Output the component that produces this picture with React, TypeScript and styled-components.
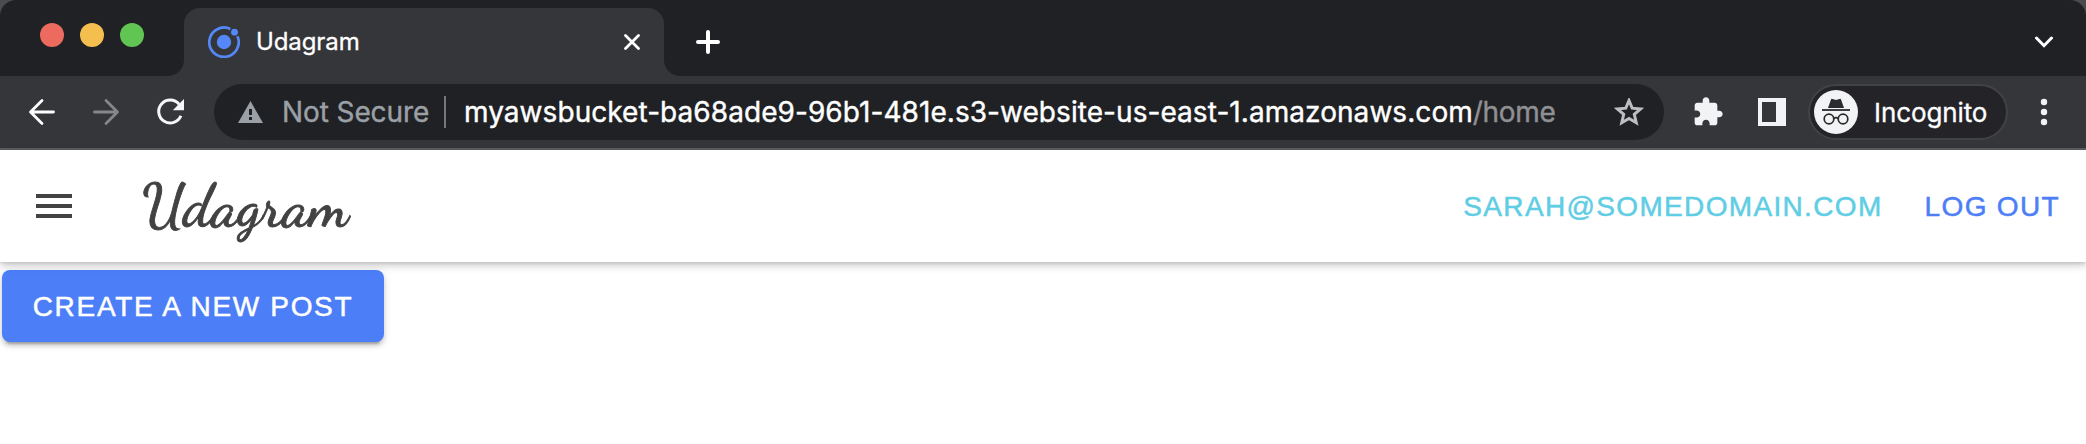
import React from "react";
import styled, { createGlobalStyle } from "styled-components";

const GlobalStyle = createGlobalStyle`
  * { box-sizing: border-box; }
  html, body { margin: 0; padding: 0; background: #fff; }
  body { overflow: hidden; }
  svg { display: block; flex: none; }
`;

const Window = styled.div`
  width: 2086px;
  height: 444px;
  display: flex;
  flex-direction: column;
  background: #fff;
  overflow: hidden;
  font-family: Inter, "Liberation Sans", sans-serif;
`;

const Desktop = styled.div`
  background: #4a4b4e;
`;

const TabStrip = styled.div`
  height: 76px;
  display: flex;
  align-items: flex-start;
  padding: 0 33px 0 40px;
  background: #202124;
  border-radius: 16px 16px 0 0;
`;

const Lights = styled.div`
  display: flex;
  gap: 16px;
  margin: 23px 40px 0 0;
`;

const Light = styled.span<{ $color: string }>`
  width: 24px;
  height: 24px;
  border-radius: 50%;
  background: ${(p) => p.$color};
`;

const Tab = styled.div`
  position: relative;
  width: 480px;
  height: 68px;
  margin-top: 8px;
  padding: 0 24px 0 24px;
  display: flex;
  align-items: center;
  background: #35363a;
  border-radius: 16px 16px 0 0;
  &::before,
  &::after {
    content: "";
    position: absolute;
    bottom: 0;
    width: 16px;
    height: 16px;
  }
  &::before {
    left: -16px;
    background: radial-gradient(circle at 0 0, transparent 15.5px, #35363a 16.5px);
  }
  &::after {
    right: -16px;
    background: radial-gradient(circle at 100% 0, transparent 15.5px, #35363a 16.5px);
  }
`;

const TabTitle = styled.span`
  flex: 1;
  margin-left: 16px;
  color: #fff;
  font-size: 24px;
  line-height: 32px;
  letter-spacing: -0.1px;
  -webkit-text-stroke: 0.3px currentColor;
`;

const StripButton = styled.span`
  margin: 30px 0 0 32px;
`;

const ChevronSlot = styled.span`
  margin: 36px 0 0 auto;
`;

const Toolbar = styled.div`
  height: 74px;
  display: flex;
  align-items: center;
  padding: 0 38px 0 28px;
  background: #35363a;
  border-bottom: 2px solid #5d5e62;
`;

const NavIcons = styled.div`
  display: flex;
  gap: 36px;
  margin-right: 30px;
`;

const Omnibox = styled.div`
  width: 1450px;
  height: 56px;
  display: flex;
  align-items: center;
  padding: 0 20px 0 24px;
  border-radius: 28px;
  background: #202124;
  font-size: 28px;
  line-height: 40px;
  white-space: pre;
  -webkit-text-stroke: 0.4px currentColor;
`;

const Security = styled.span`
  margin-left: 19px;
  width: 162px;
  color: #9aa0a6;
  letter-spacing: -0.1px;
`;

const Divider = styled.span`
  width: 2px;
  height: 32px;
  margin-right: 18px;
  background: #75777b;
`;

const Url = styled.span`
  flex: 1;
  color: #fff;
  letter-spacing: 0.06px;
`;

const UrlPath = styled.span`
  color: #8f9093;
  letter-spacing: -0.3px;
`;

const Actions = styled.div`
  display: flex;
  align-items: center;
  margin-left: auto;
`;

const ActionIcon = styled.span<{ $gap: number }>`
  margin-right: ${(p) => p.$gap}px;
`;

const Incognito = styled.div`
  width: 200px;
  height: 56px;
  display: flex;
  align-items: center;
  padding-left: 4px;
  border: 2px solid #414246;
  border-radius: 28px;
  background: #242428;
  margin-right: 32px;
`;

const IncognitoLabel = styled.span`
  margin-left: 16px;
  padding-top: 1px;
  color: #fff;
  font-size: 26px;
  line-height: 36px;
  letter-spacing: -0.1px;
  white-space: nowrap;
  -webkit-text-stroke: 0.3px currentColor;
`;

const AppHeader = styled.header`
  position: relative;
  height: 112px;
  flex: none;
  display: flex;
  align-items: center;
  padding: 0 26px 0 36px;
  background: #fff;
  box-shadow: 0 3px 8px rgba(0, 0, 0, 0.24), 0 2px 2px rgba(0, 0, 0, 0.05);
`;

const Brand = styled.h1`
  margin: 0 0 0 70px;
  color: #424242;
  font-family: "Dancing Script", "Liberation Serif", serif;
  font-weight: 500;
  font-size: 60px;
  line-height: 72px;
  -webkit-text-stroke: 0.9px currentColor;
`;

const Account = styled.nav`
  margin-left: auto;
  padding-top: 2px;
  display: flex;
  gap: 42px;
`;

const label = `
  font-family: "Liberation Sans", sans-serif;
  font-size: 28px;
  line-height: 34px;
  letter-spacing: 1.68px;
  text-transform: uppercase;
  white-space: nowrap;
  -webkit-text-stroke: 0.5px currentColor;
`;

const TextLink = styled.a<{ $color: string }>`
  ${label}
  letter-spacing: 1.34px;
  color: ${(p) => p.$color};
`;

const Content = styled.main`
  padding: 8px 2px;
`;

const PrimaryButton = styled.button`
  ${label}
  width: 382px;
  height: 72px;
  padding: 2px 0 0;
  border: 0;
  border-radius: 8px;
  background: #4c7ef8;
  color: #fff;
  box-shadow: 0 6px 2px -4px rgba(0, 0, 0, 0.2), 0 4px 4px rgba(0, 0, 0, 0.14), 0 2px 10px rgba(0, 0, 0, 0.12);
`;

const IonicMark = () => (
  <svg width="32" height="32" viewBox="0 0 32 32">
    <circle cx="16" cy="16" r="7.2" fill="#5487f8" />
    <circle cx="26.5" cy="6.2" r="3.4" fill="#5487f8" />
    <path d="M22.4 3A14.7 14.7 0 1 0 29.4 10.200" fill="none" stroke="#5487f8" strokeWidth="2.7" />
  </svg>
);

const BackIcon = () => (
  <svg width="28" height="28" viewBox="0 0 28 28" fill="none" stroke="#fff" strokeWidth="2.8" strokeLinecap="round" strokeLinejoin="round">
    <path d="M25.5 14H3M14 2.5 2.5 14 14 25.5" />
  </svg>
);

const ForwardIcon = () => (
  <svg width="28" height="28" viewBox="0 0 28 28" fill="none" stroke="#86878a" strokeWidth="2.8" strokeLinecap="round" strokeLinejoin="round">
    <path d="M2.5 14H25M14 2.5 25.5 14 14 25.5" />
  </svg>
);

const ReloadIcon = () => (
  <svg width="28" height="28" viewBox="0 0 28 28">
    <path d="M23.1 6.2A11.5 11.5 0 1 0 24.9 17.8" fill="none" stroke="#f5f6f7" strokeWidth="3" />
    <path d="M28 1v11.2H16.8z" fill="#f5f6f7" />
  </svg>
);

const WarningIcon = () => (
  <svg width="25" height="22" viewBox="0 0 25 22">
    <path d="M12.5 0 25 22H0z" fill="#9aa0a6" />
    <path d="M11 8h3v6h-3zM11 16h3v3h-3z" fill="#202124" />
  </svg>
);

const StarIcon = () => (
  <svg width="30" height="28" viewBox="0 0 30 28">
    <path d="M15 3.4 17.9 10.3 25.6 11 19.8 16 21.6 23.6 15 19.7 8.4 23.6 10.2 16 4.4 11 12.1 10.3z" fill="none" stroke="#bdbec0" strokeWidth="2.700" transform="translate(-1.500 -1.200) scale(1.100)" />
  </svg>
);

const PuzzleIcon = () => (
  <svg width="32" height="32" viewBox="0 0 24 24">
    <path fill="#f1f3f4" d="M20.5 11H19V7c0-1.100-.9-2-2-2h-4V3.500C13 2.120 11.880 1 10.500 1S8 2.120 8 3.500V5H4c-1.100 0-1.990.9-1.990 2v3.800H3.500c1.490 0 2.700 1.210 2.700 2.700s-1.210 2.700-2.700 2.700H2V20c0 1.100.9 2 2 2h3.800v-1.500c0-1.490 1.210-2.700 2.700-2.700s2.700 1.210 2.700 2.700V22H17c1.100 0 2-.9 2-2v-4h1.500c1.380 0 2.500-1.120 2.500-2.500S21.880 11 20.500 11z" />
  </svg>
);

const SidePanelIcon = () => (
  <svg width="28" height="28" viewBox="0 0 28 28">
    <path fillRule="evenodd" fill="#f1f3f4" d="M0 0h28v28H0zM4 4v20h14V4z" />
  </svg>
);

const IncognitoIcon = () => (
  <svg width="44" height="44" viewBox="0 0 44 44">
    <circle cx="22" cy="22" r="22" fill="#f1f3f4" />
    <path d="M14 18 17 9.600Q17.400 8.500 18.500 8.900L22 10 25.500 8.900Q26.600 8.500 27 9.600L30 18z" fill="#2a2b2f" />
    <path d="M8 20h28" stroke="#2a2b2f" strokeWidth="1.800" />
    <g fill="none" stroke="#2a2b2f" strokeWidth="1.700">
      <circle cx="15" cy="29" r="4.800" />
      <circle cx="29" cy="29" r="4.800" />
      <path d="M19.800 28.600Q22 26.800 24.200 28.600" />
    </g>
  </svg>
);

const MoreIcon = () => (
  <svg width="8" height="28" viewBox="0 0 8 28" fill="#f1f3f4">
    <circle cx="4" cy="4" r="3.200" />
    <circle cx="4" cy="14" r="3.200" />
    <circle cx="4" cy="24" r="3.200" />
  </svg>
);

const MenuIcon = () => (
  <svg width="36" height="24" viewBox="0 0 36 24" fill="#424242">
    <path d="M0 0h36v4H0zM0 10h36v4H0zM0 20h36v4H0z" />
  </svg>
);

export default function App() {
  return (
    <Window>
      <GlobalStyle />
      <Desktop>
        <TabStrip>
          <Lights>
            <Light $color="#ed6a5e" />
            <Light $color="#f5bf4f" />
            <Light $color="#61c554" />
          </Lights>
          <Tab>
            <IonicMark />
            <TabTitle>Udagram</TabTitle>
            <svg width="16" height="16" viewBox="0 0 16 16" stroke="#fff" strokeWidth="2.8" strokeLinecap="round">
              <path d="M1.500 1.500 14.500 14.500M14.500 1.500 1.500 14.500" />
            </svg>
          </Tab>
          <StripButton>
            <svg width="24" height="24" viewBox="0 0 24 24" stroke="#fff" strokeWidth="4" strokeLinecap="round">
              <path d="M12 2v20M2 12h20" />
            </svg>
          </StripButton>
          <ChevronSlot>
            <svg width="18" height="12" viewBox="0 0 18 12" fill="none" stroke="#fff" strokeWidth="3" strokeLinecap="round">
              <path d="M1.500 2 9 9.700 16.500 2" />
            </svg>
          </ChevronSlot>
        </TabStrip>
      </Desktop>
      <Toolbar>
        <NavIcons>
          <BackIcon />
          <ForwardIcon />
          <ReloadIcon />
        </NavIcons>
        <Omnibox>
          <WarningIcon />
          <Security>Not Secure</Security>
          <Divider />
          <Url>
            myawsbucket-ba68ade9-96b1-481e.s3-website-us-east-1.amazonaws.com<UrlPath>/home</UrlPath>
          </Url>
          <StarIcon />
        </Omnibox>
        <Actions>
          <ActionIcon $gap={34}>
            <PuzzleIcon />
          </ActionIcon>
          <ActionIcon $gap={22}>
            <SidePanelIcon />
          </ActionIcon>
          <Incognito>
            <IncognitoIcon />
            <IncognitoLabel>Incognito</IncognitoLabel>
          </Incognito>
          <MoreIcon />
        </Actions>
      </Toolbar>
      <AppHeader>
        <MenuIcon />
        <Brand>Udagram</Brand>
        <Account>
          <TextLink $color="#5fcde4">sarah@somedomain.com</TextLink>
          <TextLink $color="#4c7ef8">Log out</TextLink>
        </Account>
      </AppHeader>
      <Content>
        <PrimaryButton>Create a new post</PrimaryButton>
      </Content>
    </Window>
  );
}
